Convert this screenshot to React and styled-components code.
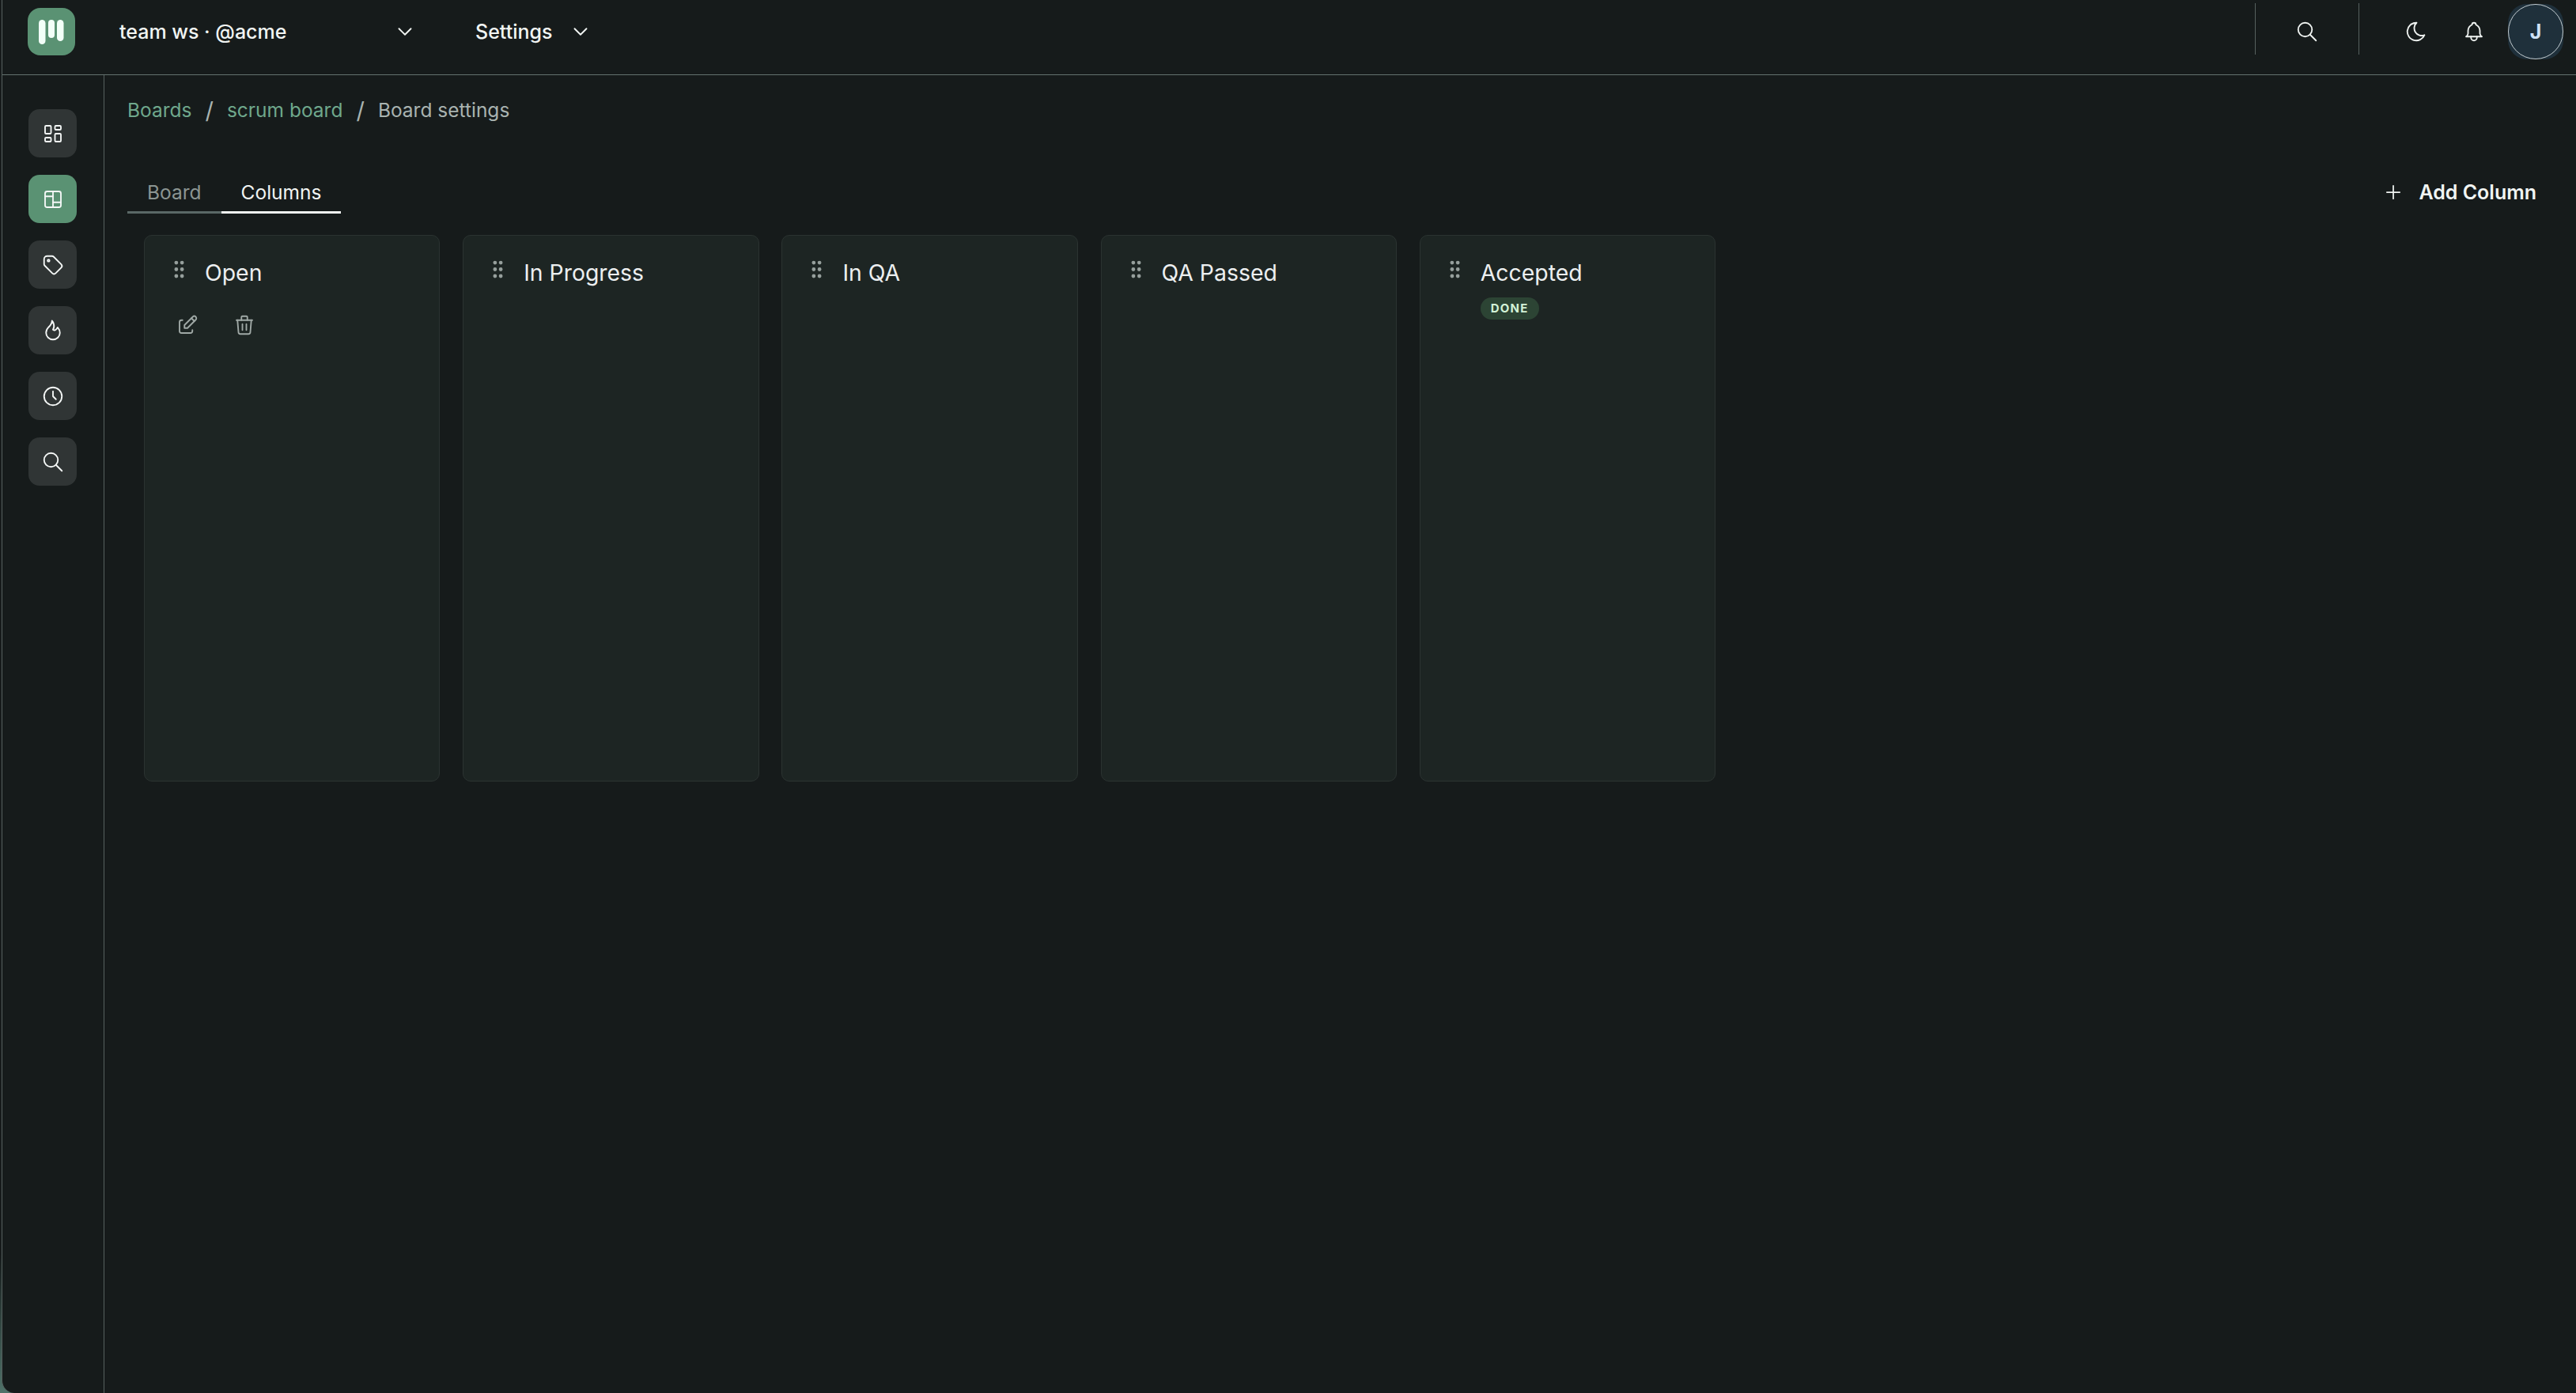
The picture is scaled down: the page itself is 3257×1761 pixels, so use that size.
import React from "react"
import styled, { createGlobalStyle } from "styled-components"
import {
  TbBell,
  TbChevronDown,
  TbClock,
  TbEdit,
  TbFlame,
  TbGripVertical,
  TbLayoutBoard,
  TbLayoutDashboard,
  TbMoon,
  TbPlus,
  TbSearch,
  TbTag,
  TbTrash,
} from "react-icons/tb"

const GlobalStyle = createGlobalStyle`
  html, body {
    margin: 0;
    height: 100%;
    background: #161b1b;
  }
  body {
    font-family: Inter, "Liberation Sans", sans-serif;
    color: #e9eeec;
    overflow: hidden;
  }
  svg {
    display: block;
    stroke-width: 1.5;
  }
`

const Frame = styled.div`
  width: 100vw;
  height: 100vh;
  padding-left: 2px;
  box-sizing: border-box;
  background: linear-gradient(to bottom, #161b1b 90%, #4f7269 100%);
`

const Shell = styled.div`
  height: 100%;
  display: flex;
  flex-direction: column;
  box-sizing: border-box;
  background: #161b1b;
  border-left: 1px solid #56615f;
  border-bottom-left-radius: 16px;
`

const TopBar = styled.header`
  height: 95px;
  flex: none;
  box-sizing: border-box;
  display: flex;
  align-items: center;
  padding: 0 16px 14px 32px;
  border-bottom: 1px solid #64716e;
`

const Logo = styled.div`
  width: 60px;
  height: 60px;
  border-radius: 16px;
  background: #5a9273;
  display: flex;
  align-items: center;
  justify-content: center;
`

const Menu = styled.div`
  display: flex;
  align-items: center;
  font-size: 25px;
  font-weight: 500;
  color: #f1f5f3;
  width: ${({ width }) => width}px;
  margin-left: ${({ offset }) => offset}px;
  justify-content: space-between;
`

const TopTools = styled.div`
  margin-left: auto;
  display: flex;
  align-items: center;
`

const Divider = styled.div`
  width: 1px;
  height: 65px;
  margin-bottom: 7px;
  background: #56615f;
`

const ToolSlot = styled.div`
  width: ${({ width }) => width || 40}px;
  margin-left: ${({ offset }) => offset || 0}px;
  display: flex;
  justify-content: center;
  color: #eef2f0;
`

const Avatar = styled.div`
  position: relative;
  width: 70px;
  height: 70px;
  margin-left: 23px;
  border-radius: 24px;
  background: #1f303b;
  color: #cfe2f7;
  font-size: 25px;
  font-weight: 700;
  display: flex;
  align-items: center;
  justify-content: center;

  &::after {
    content: "";
    position: absolute;
    inset: 0;
    border: 1px solid #c3ccd0;
    border-radius: 50%;
  }
`

const Body = styled.div`
  flex: 1;
  display: flex;
  min-height: 0;
`

const SideBar = styled.nav`
  width: 127px;
  flex: none;
  display: flex;
  flex-direction: column;
  align-items: center;
  gap: 22px;
  padding: 43px 1px 0 0;
  border-right: 1px solid #56615f;
`

const SideButton = styled.div`
  width: 61px;
  height: 61px;
  border-radius: 14px;
  background: ${({ active }) => (active ? "#5a9273" : "#303535")};
  color: #f4f7f6;
  display: flex;
  align-items: center;
  justify-content: center;
`

const Main = styled.main`
  flex: 1;
  min-width: 0;
  padding: 29px 50px 0 29px;
`

const Crumbs = styled.div`
  display: flex;
  align-items: center;
  height: 30px;
  font-size: 24.5px;
  color: #a9b3b0;
`

const CrumbLink = styled.span`
  color: #6fa88c;
`

const CrumbSlash = styled.span`
  margin: 0 17px;
  font-size: 29px;
  font-weight: 400;
`

const TabRow = styled.div`
  display: flex;
  align-items: flex-end;
  justify-content: space-between;
  margin-top: 72px;
`

const Tabs = styled.div`
  display: flex;
`

const Tab = styled.div`
  padding: 0 25px 3px;
  height: 38px;
  line-height: 34px;
  font-size: 24.5px;
  color: ${({ active }) => (active ? "#f1f5f3" : "#8b9592")};
  border-bottom: 3px solid ${({ active }) => (active ? "#f1f5f3" : "#5a6866")};
`

const AddButton = styled.div`
  display: flex;
  align-items: center;
  gap: 18px;
  font-size: 25px;
  font-weight: 600;
  color: #f1f5f3;
  padding-bottom: 12px;
`

const Board = styled.div`
  display: flex;
  gap: 28.8px;
  margin: 27px 0 0 21px;
`

const Card = styled.section`
  width: 374.4px;
  height: 691px;
  box-sizing: border-box;
  padding: 28px 0 0 28px;
  background: #1d2523;
  border: 1px solid #2b3331;
  border-radius: 10px;
`

const CardHead = styled.div`
  display: grid;
  grid-template-columns: 29px 1fr;
  column-gap: 19px;
  color: #969f9c;
`

const Grip = styled(TbGripVertical)`
  fill: currentColor;
  stroke-width: 2;
  transform: translateX(1px);
`

const CardName = styled.div`
  font-size: 28.4px;
  line-height: 37px;
  color: #eceff0;
`

const Badge = styled.span`
  display: inline-block;
  margin-top: 13px;
  height: 28px;
  line-height: 28px;
  padding: 0 13px;
  border-radius: 14px;
  background: #2c4434;
  color: #d2f2d6;
  font-size: 15px;
  font-weight: 700;
  letter-spacing: 1.2px;
`

const CardActions = styled.div`
  display: flex;
  gap: 42px;
  margin: 33px 0 0 11px;
  color: #a0a9a6;
`

const columns = [
  { name: "Open", editable: true },
  { name: "In Progress" },
  { name: "In QA" },
  { name: "QA Passed" },
  { name: "Accepted", done: true },
]

const sideIcons = [
  { icon: TbLayoutDashboard, key: "home" },
  { icon: TbLayoutBoard, key: "boards", active: true },
  { icon: TbTag, key: "tags" },
  { icon: TbFlame, key: "hot" },
  { icon: TbClock, key: "recent" },
  { icon: TbSearch, key: "search" },
]

const App = () => (
  <Frame>
    <GlobalStyle />
    <Shell>
      <TopBar>
        <Logo>
          <svg width="60" height="60" viewBox="0 0 60 60" fill="#f2fff8">
            <rect x="14" y="15" width="8.5" height="31" rx="4.25" />
            <rect x="26" y="15" width="8" height="23" rx="4" />
            <rect x="37" y="15" width="8.5" height="27" rx="4.25" />
          </svg>
        </Logo>
        <Menu width={376} offset={56}>
          team ws · @acme
          <TbChevronDown size={30} />
        </Menu>
        <Menu width={148} offset={74}>
          Settings
          <TbChevronDown size={30} />
        </Menu>
        <TopTools>
          <Divider />
          <ToolSlot width={130}>
            <TbSearch size={30} />
          </ToolSlot>
          <Divider />
          <ToolSlot offset={52}>
            <TbMoon size={30} />
          </ToolSlot>
          <ToolSlot offset={33}>
            <TbBell size={30} />
          </ToolSlot>
          <Avatar>J</Avatar>
        </TopTools>
      </TopBar>
      <Body>
        <SideBar>
          {sideIcons.map(({ icon: Icon, key, active }) => (
            <SideButton key={key} active={active}>
              <Icon size={30} />
            </SideButton>
          ))}
        </SideBar>
        <Main>
          <Crumbs>
            <CrumbLink>Boards</CrumbLink>
            <CrumbSlash>/</CrumbSlash>
            <CrumbLink>scrum board</CrumbLink>
            <CrumbSlash>/</CrumbSlash>
            Board settings
          </Crumbs>
          <TabRow>
            <Tabs>
              <Tab>Board</Tab>
              <Tab active>Columns</Tab>
            </Tabs>
            <AddButton>
              <TbPlus size={28} />
              Add Column
            </AddButton>
          </TabRow>
          <Board>
            {columns.map(col => (
              <Card key={col.name}>
                <CardHead>
                  <Grip size={29} />
                  <div>
                    <CardName>{col.name}</CardName>
                    {col.done && <Badge>DONE</Badge>}
                  </div>
                </CardHead>
                {col.editable && (
                  <CardActions>
                    <TbEdit size={30} />
                    <TbTrash size={30} />
                  </CardActions>
                )}
              </Card>
            ))}
          </Board>
        </Main>
      </Body>
    </Shell>
  </Frame>
)

export default App
